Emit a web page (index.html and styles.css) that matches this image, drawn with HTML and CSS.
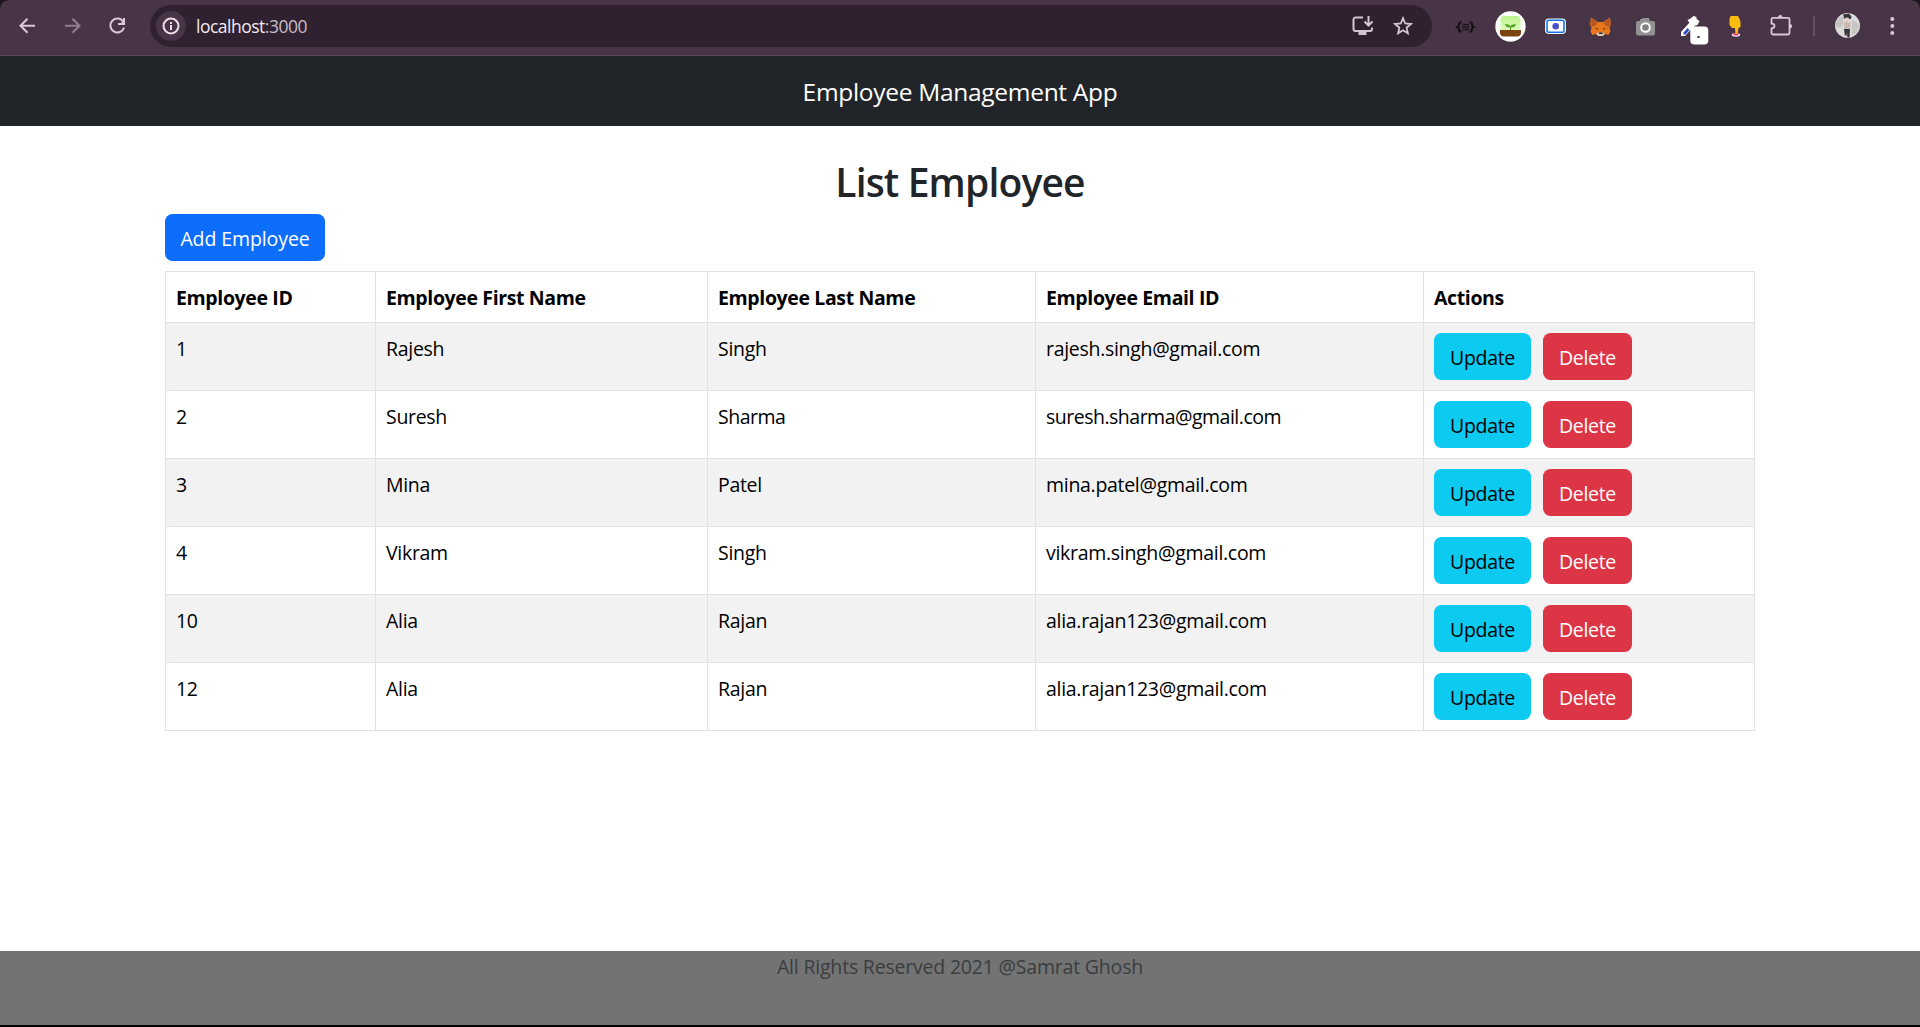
FILE: index.html
```html
<!DOCTYPE html>
<html lang="en">
<head>
<meta charset="utf-8">
<title>Employee Management App</title>
<link rel="stylesheet" href="styles.css">
</head>
<body>
<div class="toolbar">
  <div class="nav">
    <svg class="slot" viewBox="0 0 45 55"><path class="line" d="M30 25.8H16M22.5 18.8l-7 7 7 7"/></svg>
    <svg class="slot dim" viewBox="0 0 45 55"><path class="line" d="M15 25.8h14M22.500 18.800l7 7-7 7"/></svg>
    <svg class="slot" viewBox="0 0 45 55"><path class="line" d="M28.500 22a7 7 0 1 0 .6 5.500"/><path class="fill" d="M30 18v7h-7v-2h3l2-2v-3z"/></svg>
  </div>
  <div class="omnibox">
    <span class="info"><svg width="18" height="18" viewBox="0 0 18 18"><circle cx="9" cy="9" r="7.500" fill="none" stroke="#eadfe8" stroke-width="2"/><path d="M8 8h2v5H8zM8 5h2v2H8z" fill="#eadfe8"/></svg></span>
    <span class="url"><span class="host">localhost</span>:3000</span>
    <svg class="install" width="22" height="20" viewBox="0 0 22 20"><path d="M11 1.500H3.500a2 2 0 0 0-2 2v9.500a2 2 0 0 0 2 2h14.500a2 2 0 0 0 2-2v-1.500M16.500 0v9M12.500 5.500l4 4 4-4" fill="none" stroke="#d3c6d1" stroke-width="2"/><path d="M6.500 15h8v4h-8z" fill="#d3c6d1"/></svg>
    <svg class="star" width="20" height="20" viewBox="0 0 20 20"><path d="M10 2.200l2.200 5.300 5.700.5-4.300 3.700 1.300 5.600-4.900-3-4.900 3 1.300-5.600L2.100 8l5.700-.5z" fill="none" stroke="#d3c6d1" stroke-width="1.800"/></svg>
  </div>
  <div class="extensions">
    <svg class="slot" viewBox="0 0 45 55"><path d="M18.500 22.300c-2.200 0-2.500.5-2.500 2s0 2-1.500 2.700c1.500.5 1.500 1 1.500 2.500s.3 2.200 2.500 2.200M26.500 22.300c2.200 0 2.500.5 2.500 2s0 2 1.500 2.700c-1.500.5-1.500 1-1.500 2.500s-.3 2.200-2.500 2.200" fill="none" stroke="#141014" stroke-width="2"/><path d="M19.500 24.500h6.500M19.500 27h6.500M19.500 29.500h6.500" stroke="#1d171d" stroke-width="1.500"/></svg>
    <svg class="slot" viewBox="0 0 45 55"><defs><linearGradient id="sky" x1="0" y1="0" x2="0" y2="1"><stop offset="0" stop-color="#bdf58c"/><stop offset="1" stop-color="#eafbcf"/></linearGradient></defs><circle cx="22.500" cy="27.300" r="15.500" fill="#2f2230" opacity=".5"/><circle cx="22.500" cy="26.500" r="15.200" fill="#fff"/><rect x="12.500" y="16" width="20" height="20" rx="4" fill="url(#sky)"/><path d="M12 30h21v2.500a4 4 0 0 1-4 4H16a4 4 0 0 1-4-4z" fill="#7b4310"/><path d="M22 30v-2.500c-3 0-4.500-1-5-3.500 3 0 5 1 5.500 2.500.5-1.500 2.500-2.500 5.500-2-.5 2-2 3-5 3V30z" fill="#4da51c"/></svg>
    <svg class="slot" viewBox="0 0 45 55"><rect x="12" y="18.500" width="21" height="15.500" rx="4" fill="#f4f8ff"/><rect x="14" y="20.300" width="17" height="12" rx="2" fill="#fff" stroke="#1473e6" stroke-width="1.600"/><circle cx="22.700" cy="26.300" r="3.300" fill="#4850cb"/></svg>
    <svg class="slot" viewBox="0 0 45 55"><path d="M13 17.500l7 4.500h5l7-4.500 1 7-1.500 3 1 4-2 3.500-3.500-1-2.500 2h-4l-2.500-2-3.500 1-2-3.500 1-4-1.500-3z" fill="#e8761d"/><path d="M13.500 18l6 4-2 4-4 .5-1-2zM31.500 18l-6 4 2 4 4 .5 1-2z" fill="#b95724"/><path d="M17 28l3 .3-.5 1.700zM28 28l-3 .3.500 1.700z" fill="#4d3a30"/><path d="M18 34l2-1.500h5l2 1.500-2.500 2h-4z" fill="#d9c8b8"/><path d="M21 32.500h3.500V34H21z" fill="#232832"/></svg>
    <svg class="slot" viewBox="0 0 45 55"><path d="M15 21h2v-2h2l1-1h6l1 3h3q2 0 2 2v10.500q0 2-2 2H15q-2 0-2-2V23q0-2 2-2z" fill="#929292"/><circle cx="22.500" cy="27.500" r="4.300" fill="#808080" stroke="#fff" stroke-width="2"/></svg>
    <svg class="slot" viewBox="0 0 45 55"><path d="M13 36v-4l9-10 4 4-9 10z" fill="#fff"/><path d="M15.500 34.500v-2l4-4.500 2 2-4 4.500z" fill="#2e50c9"/><path d="M19.500 20l3-1.500 3-2.500 3 1v2l3 2-2 4-3 1-1.500 2z" fill="#fff"/><rect x="22.300" y="26.500" width="18" height="18" rx="4" fill="#fff"/><rect x="29.500" y="36" width="2" height="2" fill="#26313b"/></svg>
    <svg class="slot" viewBox="0 0 45 55"><ellipse cx="23" cy="34.800" rx="4.200" ry="1.900" fill="#f8eaf1"/><ellipse cx="23" cy="34" rx="2.800" ry="1.500" fill="#e62b7b"/><path d="M17.500 16h7.500c1 2 2.500 4 2.500 7v4l-2 1-1 6h-2l-.500-6h-3l-2.500-3v-6z" fill="#fbbc11"/></svg>
    <svg class="slot" viewBox="0 0 45 55"><path class="line thin" d="M13.500 19.300c0-.9.500-1.500 1.500-1.500h15c1 0 1.500.5 1.500 1.500v13.700c0 1-.500 1.500-1.500 1.500H15c-1 0-1.500-.5-1.500-1.500v-4.500c4-.5 4-4.500 0-5z"/><path class="fill" d="M20 17.500c0-3.300 4.500-3.300 4.500 0zM32 24c2.800 0 2.800 4.500 0 4.500z"/></svg>
  </div>
  <span class="divider"></span>
  <svg class="slot" viewBox="0 0 45 55"><circle cx="22.500" cy="25.500" r="12.500" fill="#dadada"/><path d="M11 22q3-6 8-5l-2 10q-4 1-6-1zM27 20q5 1 7 6l-3 7-4 2z" fill="#c6c5c3"/><path d="M18 14.500l6-1 2.500 3-.5 2.500h-6.500z" fill="#30383c"/><circle cx="22" cy="20" r="2.500" fill="#e5cfc2"/><path d="M18.500 22.500h7l-.5 7h-5.500z" fill="#c9b8ae"/><path d="M19 29h6l-.5 8.500H22.300l-.3-5-.5 3h-1.700z" fill="#34363a"/></svg>
  <svg class="slot" viewBox="0 0 45 55"><g class="fill"><circle cx="22.300" cy="19" r="2"/><circle cx="22.300" cy="26" r="2"/><circle cx="22.300" cy="33" r="2"/></g></svg>
</div>
<header class="navbar"><span class="brand">Employee Management App</span></header>
<main class="container">
  <h2 class="title">List Employee</h2>
  <a class="btn add">Add Employee</a>
  <table class="employees">
    <colgroup><col class="c-id"><col class="c-first"><col class="c-last"><col class="c-mail"><col class="c-act"></colgroup>
    <thead><tr><th>Employee ID</th><th>Employee First Name</th><th>Employee Last Name</th><th>Employee Email ID</th><th>Actions</th></tr></thead>
    <tbody>
      <tr><td>1</td><td>Rajesh</td><td>Singh</td><td>rajesh.singh@gmail.com</td><td><div class="actions"><a class="btn update">Update</a><a class="btn delete">Delete</a></div></td></tr>
      <tr><td>2</td><td>Suresh</td><td class="tight">Sharma</td><td class="tight">suresh.sharma@gmail.com</td><td><div class="actions"><a class="btn update">Update</a><a class="btn delete">Delete</a></div></td></tr>
      <tr><td>3</td><td>Mina</td><td>Patel</td><td>mina.patel@gmail.com</td><td><div class="actions"><a class="btn update">Update</a><a class="btn delete">Delete</a></div></td></tr>
      <tr><td>4</td><td>Vikram</td><td>Singh</td><td>vikram.singh@gmail.com</td><td><div class="actions"><a class="btn update">Update</a><a class="btn delete">Delete</a></div></td></tr>
      <tr><td>10</td><td>Alia</td><td>Rajan</td><td>alia.rajan123@gmail.com</td><td><div class="actions"><a class="btn update">Update</a><a class="btn delete">Delete</a></div></td></tr>
      <tr><td>12</td><td>Alia</td><td>Rajan</td><td>alia.rajan123@gmail.com</td><td><div class="actions"><a class="btn update">Update</a><a class="btn delete">Delete</a></div></td></tr>
    </tbody>
  </table>
</main>
<footer class="footer">All Rights Reserved 2021 @Samrat Ghosh</footer>
</body>
</html>
```
FILE: styles.css
```css
* { box-sizing: border-box; }
body {
  margin: 0;
  min-height: 1027px;
  display: flex;
  flex-direction: column;
  background: #fff;
  color: #212529;
  font: 19.5px/30px "Open Sans", "Noto Sans", sans-serif;
  letter-spacing: -.3px;
}

/* Browser toolbar */
.toolbar {
  height: 56px;
  padding-left: 5px;
  display: flex;
  background:
    radial-gradient(circle at 100% 100%, transparent 7px, #1e151f 8px) 0 0 / 8px 8px no-repeat,
    radial-gradient(circle at 0 100%, transparent 7px, #1e151f 8px) 100% 0 / 8px 8px no-repeat,
    #483447;
  border-bottom: 1px solid #574a55;
}
.nav, .extensions { display: flex; }
.slot { width: 45px; height: 55px; flex: none; }
.line { fill: none; stroke: #dcc5da; stroke-width: 2; }
.thin { stroke-width: 1.8; }
.fill { fill: #dcc5da; }
.dim { opacity: .5; }
.omnibox {
  width: 1282px;
  height: 42px;
  margin: 5px 11px 0 10px;
  padding: 0 19px 0 6px;
  border-radius: 21px;
  display: flex;
  align-items: center;
  background: #2f2130;
}
.info {
  width: 30px;
  height: 30px;
  border-radius: 50%;
  display: flex;
  align-items: center;
  justify-content: center;
  background: #483447;
}
.url { margin-left: 10px; font-size: 17.5px; letter-spacing: -.5px; color: #c9bbc8; }
.host { color: #f3e9f2; }
.install { margin-left: auto; }
.star { margin-left: 19px; }
.divider { width: 2px; height: 20px; margin: 16px 10px 0; background: #62505f; }

/* Page */
.navbar {
  height: 70px;
  padding-top: 2px;
  display: flex;
  align-items: center;
  justify-content: center;
  background: #212529;
  color: #fff;
}
.brand { font-size: 24.5px; letter-spacing: -.3px; }
.container { width: 1590px; margin: 0 auto; flex: 1; }
.title {
  margin: 32px 0 8px;
  font-size: 39px;
  line-height: 48px;
  font-weight: 600;
  letter-spacing: -.85px;
  text-align: center;
}
.btn {
  display: inline-flex;
  justify-content: center;
  height: 47px;
  padding-top: 10px;
  border-radius: 7.5px;
  color: #fff;
}
.add { width: 160px; letter-spacing: -.1px; background: #0d6efd; }
.employees {
  width: 1590px;
  margin-top: 10px;
  table-layout: fixed;
  border-collapse: collapse;
  color: #000;
}
.employees th, .employees td {
  padding: 11px 10px 9px;
  border: 1px solid #dee2e6;
  text-align: left;
  vertical-align: top;
}
.employees th { letter-spacing: -.37px; }
.employees td:last-child { padding: 10px; }
.tight { letter-spacing: -.5px; }
.c-id { width: 210px; }
.c-first { width: 332px; }
.c-last { width: 328px; }
.c-mail { width: 388px; }
tbody tr:nth-child(odd) { background: #f2f2f2; }
.actions { display: flex; gap: 12px; }
.update { width: 97px; background: #0dcaf0; color: #000; }
.delete { width: 89px; background: #dc3545; }
.footer {
  height: 76px;
  padding-top: 1px;
  background: #737373;
  border-bottom: 2px solid #000;
  color: #393d40;
  letter-spacing: -.2px;
  text-align: center;
}
```
